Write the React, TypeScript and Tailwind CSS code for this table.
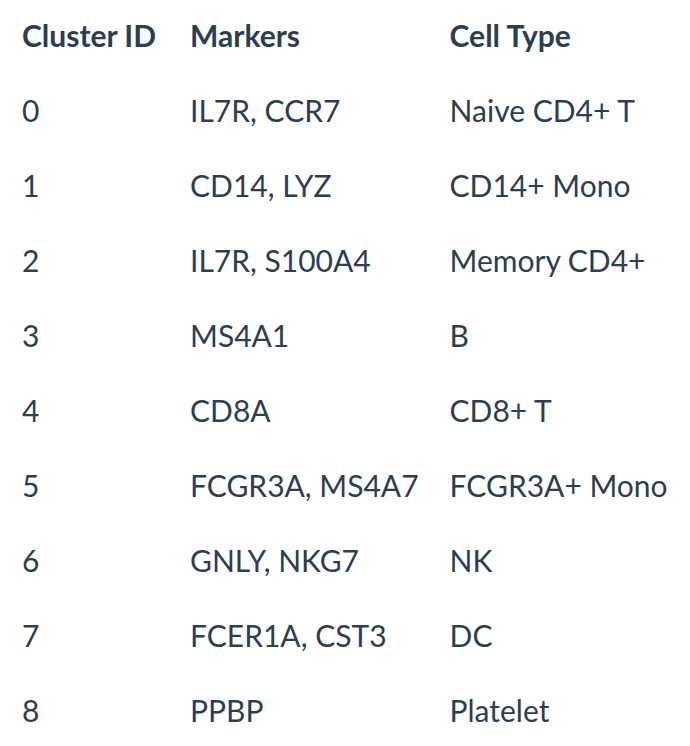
const rows = [
  { id: "0", markers: "IL7R, CCR7", cell: "Naive CD4+ T" },
  { id: "1", markers: "CD14, LYZ", cell: "CD14+ Mono" },
  { id: "2", markers: "IL7R, S100A4", cell: "Memory CD4+" },
  { id: "3", markers: "MS4A1", cell: "B" },
  { id: "4", markers: "CD8A", cell: "CD8+ T" },
  { id: "5", markers: "FCGR3A, MS4A7", cell: "FCGR3A+ Mono" },
  { id: "6", markers: "GNLY, NKG7", cell: "NK" },
  { id: "7", markers: "FCER1A, CST3", cell: "DC" },
  { id: "8", markers: "PPBP", cell: "Platelet" },
];

export default function App() {
  return (
    <div
      className="w-[690px] h-[746px] bg-white overflow-hidden pl-[6px] text-[#2c3e50]"
      style={{ fontFamily: "Lato, 'Open Sans', sans-serif" }}
    >
      <table className="border-collapse text-[30px] leading-none -mt-[3px]">
        <thead>
          <tr className="h-[75px]">
            <th className="pl-4 pr-[18px] text-left font-bold align-middle">Cluster ID</th>
            <th className="px-4 text-left font-bold align-middle">Markers</th>
            <th className="px-4 text-left font-bold align-middle">Cell Type</th>
          </tr>
        </thead>
        <tbody>
          {rows.map((r) => (
            <tr key={r.id} className="h-[75px]">
              <td className="pl-4 pr-[18px] align-middle">{r.id}</td>
              <td className="pl-4 pr-[15px] align-middle whitespace-nowrap">{r.markers}</td>
              <td className="px-4 align-middle whitespace-nowrap">{r.cell}</td>
            </tr>
          ))}
        </tbody>
      </table>
    </div>
  );
}
